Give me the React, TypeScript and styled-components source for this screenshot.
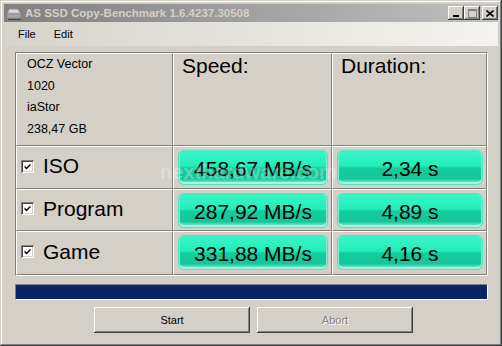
import React from 'react';
import styled, { createGlobalStyle } from 'styled-components';

const GlobalStyle = createGlobalStyle`
  html, body {
    margin: 0;
    padding: 0;
    background: #d4d0c8;
  }
  * {
    box-sizing: border-box;
  }
`;

// classic win9x-style window
const Window = styled.div`
  width: 502px;
  height: 346px;
  padding: 4px;
  background: #d4d0c8;
  display: flex;
  flex-direction: column;
  font-family: "Liberation Sans", Arial, sans-serif;
  box-shadow: inset -1px -1px #404040, inset 1px 1px #d4d0c8,
    inset -2px -2px #808080, inset 2px 2px #ffffff;
`;

const TitleBar = styled.div`
  height: 18px;
  display: flex;
  align-items: center;
  padding: 0 0 0 2px;
  background: linear-gradient(to right, #808080, #c0c0c0);
`;

const TitleText = styled.span`
  margin-left: 3px;
  font-size: 11.5px;
  font-weight: bold;
  color: #d4d0c8;
  white-space: nowrap;
  flex: 1;
`;

const CaptionButton = styled.div<{ $gap?: number }>`
  width: 16px;
  height: 14px;
  margin-left: ${({ $gap }) => $gap ?? 0}px;
  background: #d4d0c8;
  display: flex;
  align-items: center;
  justify-content: center;
  box-shadow: inset -1px -1px #404040, inset 1px 1px #ffffff,
    inset -2px -2px #808080;
`;

const MenuBar = styled.div`
  height: 24px;
  display: flex;
  align-items: center;
  padding-left: 5px;
  background: linear-gradient(to right, #d6d3cc, #f4f3ef);
`;

const MenuItem = styled.span`
  padding: 0 9px;
  font-size: 11px;
  color: #000;
`;

const Body = styled.div`
  position: relative;
  flex: 1;
  padding: 6px 0 0 11px;
`;

const Table = styled.div`
  width: 473px;
  display: grid;
  grid-template-columns: 157px 159px 155px;
  grid-template-rows: 93px 43px 42px 44px;
  border-top: 1px solid #808080;
  border-left: 1px solid #808080;
  border-right: 1px solid #ffffff;
  border-bottom: 1px solid #ffffff;
`;

const Cell = styled.div`
  border-top: 1px solid #ffffff;
  border-left: 1px solid #ffffff;
  border-right: 1px solid #808080;
  border-bottom: 1px solid #808080;
  min-width: 0;
`;

const InfoCell = styled(Cell)`
  padding: 0 0 0 10px;
`;

const InfoLine = styled.div`
  font-size: 12.5px;
  line-height: 21.5px;
  color: #000;
`;

const HeaderCell = styled(Cell)`
  padding: 0 0 0 8px;
  font-size: 21px;
  line-height: 24px;
  color: #000;
`;

const LabelCell = styled(Cell)`
  display: flex;
  align-items: center;
  gap: 9px;
  padding: 0 0 3px 4px;
  font-size: 21px;
  color: #000;
`;

const CheckBox = styled.div`
  width: 13px;
  height: 13px;
  background: #ffffff;
  display: flex;
  align-items: center;
  justify-content: center;
  box-shadow: inset 1px 1px #808080, inset -1px -1px #ffffff,
    inset 2px 2px #404040, inset -2px -2px #d4d0c8;
`;

const ValueCell = styled(Cell)`
  padding: 3px 3px 0 4px;
`;

const Pill = styled.div`
  height: 35px;
  border-radius: 6px;
  border: 1px solid #4fe3bd;
  background: linear-gradient(
    #3af5c8 0%,
    #22edb9 46%,
    #14cc9c 52%,
    #13c799 84%,
    #9cf3da 100%
  );
  box-shadow: inset 0 -2px 0 #a6f6df, inset 1px 0 0 #7cf0d0, inset -1px 0 0 #7cf0d0;
  display: flex;
  align-items: center;
  justify-content: center;
  padding-top: 3px;
  font-size: 21px;
  color: #000;
  white-space: nowrap;
`;

const Progress = styled.div`
  margin-top: 8px;
  width: 473px;
  height: 16px;
  background: #0b2464;
  border-top: 1px solid #808080;
  border-left: 1px solid #808080;
  border-right: 1px solid #ffffff;
  border-bottom: 1px solid #ffffff;
`;

const ButtonRow = styled.div`
  margin-top: 7px;
  padding-left: 79px;
  display: flex;
  gap: 7px;
`;

const PushButton = styled.div<{ $disabled?: boolean }>`
  width: 156px;
  height: 26px;
  display: flex;
  align-items: center;
  justify-content: center;
  font-size: 11px;
  background: #d4d0c8;
  color: ${({ $disabled }) => ($disabled ? '#808080' : '#000')};
  text-shadow: ${({ $disabled }) => ($disabled ? '1px 1px 0 #ffffff' : 'none')};
  box-shadow: inset -1px -1px #404040, inset 1px 1px #ffffff,
    inset -2px -2px #808080;
`;

const Watermark = styled.div`
  position: absolute;
  left: 156px;
  top: 114px;
  font-size: 20px;
  font-weight: bold;
  line-height: 24px;
  color: rgba(255, 255, 255, 0.28);
  pointer-events: none;
`;

const rows = [
  { name: 'ISO', speed: '458,67 MB/s', time: '2,34 s' },
  { name: 'Program', speed: '287,92 MB/s', time: '4,89 s' },
  { name: 'Game', speed: '331,88 MB/s', time: '4,16 s' },
];

function DriveIcon() {
  return (
    <svg width="16" height="16" viewBox="0 0 16 16">
      <path d="M3 4 L12 4 L15 9 L1 9 Z" fill="#c8c8c8" stroke="#909090" strokeWidth="0.8" />
      <rect x="1" y="9" width="14" height="4" fill="#a8a8a8" stroke="#808080" strokeWidth="0.8" />
      <line x1="3" y1="6" x2="12" y2="6" stroke="#e8e8e8" strokeWidth="1" />
      <line x1="2" y1="14.5" x2="15" y2="14.5" stroke="#3040a0" strokeWidth="1" />
    </svg>
  );
}

function Check() {
  return (
    <svg width="7" height="7" viewBox="0 0 7 7">
      <path d="M0.5 2.5 L2.5 4.5 L6.5 0.5 L6.5 2.5 L2.5 6.5 L0.5 4.5 Z" fill="#000" />
    </svg>
  );
}

export default function App() {
  return (
    <>
      <GlobalStyle />
      <Window>
        <TitleBar>
          <DriveIcon />
          <TitleText>AS SSD Copy-Benchmark 1.6.4237.30508</TitleText>
          <CaptionButton>
            <svg width="8" height="8" viewBox="0 0 8 8">
              <rect x="1" y="6" width="6" height="2" fill="#000" />
            </svg>
          </CaptionButton>
          <CaptionButton>
            <svg width="9" height="9" viewBox="0 0 9 9">
              <rect x="0.5" y="0.5" width="8" height="8" fill="none" stroke="#808080" />
              <line x1="0" y1="1.5" x2="9" y2="1.5" stroke="#808080" />
            </svg>
          </CaptionButton>
          <CaptionButton $gap={2}>
            <svg width="8" height="7" viewBox="0 0 8 7">
              <path d="M0.5 0.5 L7.5 6.5 M7.5 0.5 L0.5 6.5" stroke="#000" strokeWidth="1.6" />
            </svg>
          </CaptionButton>
        </TitleBar>
        <MenuBar>
          <MenuItem>File</MenuItem>
          <MenuItem>Edit</MenuItem>
        </MenuBar>
        <Body>
          <Table>
            <InfoCell>
              <InfoLine>OCZ Vector</InfoLine>
              <InfoLine>1020</InfoLine>
              <InfoLine>iaStor</InfoLine>
              <InfoLine>238,47 GB</InfoLine>
            </InfoCell>
            <HeaderCell>Speed:</HeaderCell>
            <HeaderCell>Duration:</HeaderCell>
            {rows.map(r => (
              <React.Fragment key={r.name}>
                <LabelCell>
                  <CheckBox>
                    <Check />
                  </CheckBox>
                  {r.name}
                </LabelCell>
                <ValueCell>
                  <Pill>{r.speed}</Pill>
                </ValueCell>
                <ValueCell>
                  <Pill>{r.time}</Pill>
                </ValueCell>
              </React.Fragment>
            ))}
          </Table>
          <Progress />
          <ButtonRow>
            <PushButton>Start</PushButton>
            <PushButton $disabled>Abort</PushButton>
          </ButtonRow>
          <Watermark>nexthardware.com</Watermark>
        </Body>
      </Window>
    </>
  );
}
